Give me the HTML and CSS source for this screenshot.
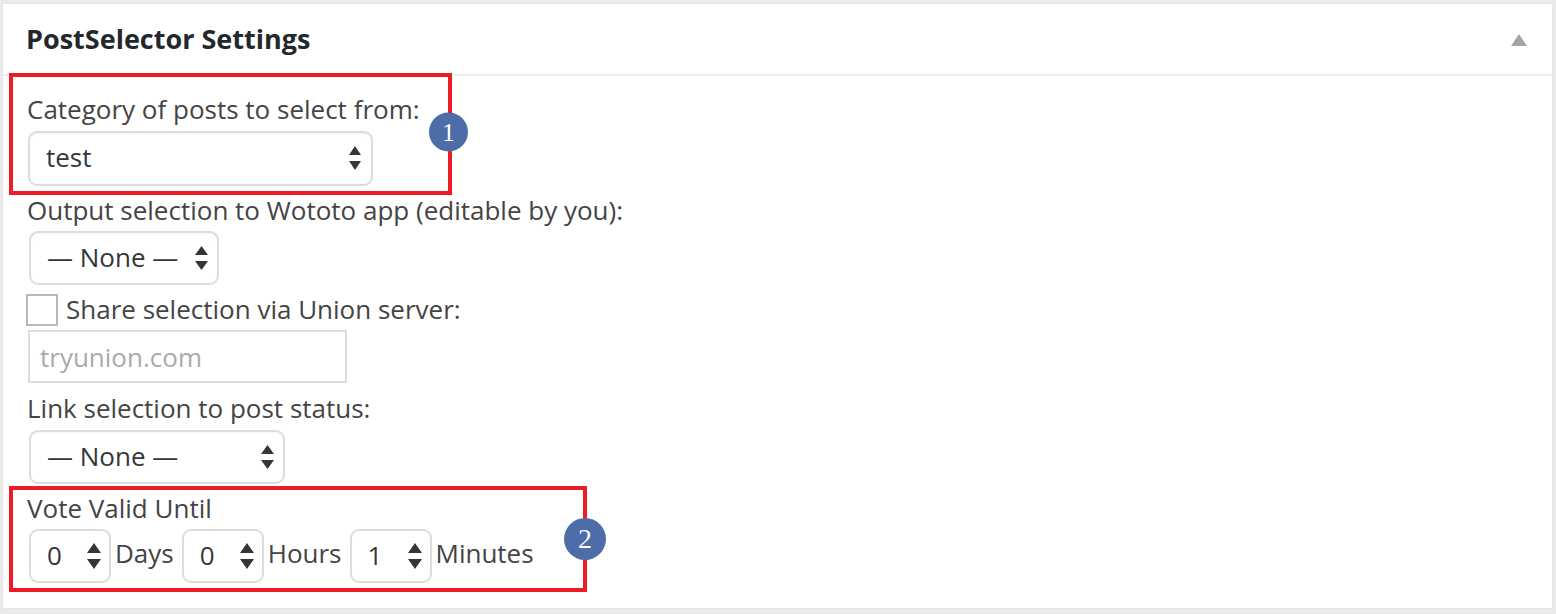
FILE: index.html
```html
<!DOCTYPE html>
<html>
<head>
<meta charset="utf-8">
<link rel="stylesheet" href="styles.css">
</head>
<body>
<div class="panel">
  <div class="panel-head">
    <h2 class="title">PostSelector Settings</h2>
    <svg class="toggle" width="16" height="12" viewBox="0 0 16 12"><polygon points="8,0 16,12 0,12" fill="#a0a5aa"/></svg>
  </div>
  <div class="panel-body">
    <div class="group group-1">
      <div class="label">Category of posts to select from:</div>
      <div class="select sel-1"><span>test</span>
        <svg class="arrows" width="12" height="25" viewBox="0 0 12 25"><polygon points="6,0 12,9 0,9" fill="#32373c"/><polygon points="0,15 12,15 6,24" fill="#32373c"/></svg>
      </div>
      <span class="badge badge-1">1</span>
    </div>
    <div class="label">Output selection to Wototo app (editable by you):</div>
    <div class="select sel-2"><span>— None —</span>
      <svg class="arrows" width="13" height="25" viewBox="0 0 13 25"><polygon points="6.5,0 13,9 0,9" fill="#32373c"/><polygon points="0,15 13,15 6.5,24" fill="#32373c"/></svg>
    </div>
    <div class="check-row">
      <span class="checkbox"></span>
      <span class="label-inline">Share selection via Union server:</span>
    </div>
    <div class="text-input">tryunion.com</div>
    <div class="label label-3">Link selection to post status:</div>
    <div class="select sel-3"><span>— None —</span>
      <svg class="arrows" width="13" height="25" viewBox="0 0 13 25"><polygon points="6.5,0 13,9 0,9" fill="#32373c"/><polygon points="0,15 13,15 6.5,24" fill="#32373c"/></svg>
    </div>
    <div class="group group-2">
      <div class="label">Vote Valid Until</div>
      <div class="time-row">
        <div class="number"><span>0</span>
          <svg class="arrows" width="14" height="27" viewBox="0 0 14 27"><polygon points="7,0 14,10 0,10" fill="#32373c"/><polygon points="0,16 14,16 7,26" fill="#32373c"/></svg>
        </div>
        <span class="unit">Days</span>
        <div class="number"><span>0</span>
          <svg class="arrows" width="14" height="27" viewBox="0 0 14 27"><polygon points="7,0 14,10 0,10" fill="#32373c"/><polygon points="0,16 14,16 7,26" fill="#32373c"/></svg>
        </div>
        <span class="unit">Hours</span>
        <div class="number"><span>1</span>
          <svg class="arrows" width="14" height="27" viewBox="0 0 14 27"><polygon points="7,0 14,10 0,10" fill="#32373c"/><polygon points="0,16 14,16 7,26" fill="#32373c"/></svg>
        </div>
        <span class="unit">Minutes</span>
      </div>
      <span class="badge badge-2">2</span>
    </div>
  </div>
</div>
</body>
</html>
```

FILE: styles.css
```css
html, body {
  margin: 0;
  padding: 0;
}
body {
  background: #ebebeb;
  font-family: "Open Sans", "Liberation Sans", sans-serif;
  color: #444;
  font-size: 26px;
  line-height: 30px;
  width: 1556px;
  height: 614px;
  overflow: hidden;
}
.panel {
  margin: 3px 3px 0 2px;
  height: 606px;
  box-sizing: border-box;
  background: #fff;
  border: 1px solid #e5e5e5;
}
.panel-head {
  height: 70px;
  border-bottom: 2px solid #eeeeee;
  display: flex;
  align-items: center;
  justify-content: space-between;
  padding: 0 25px 0 23px;
}
.title {
  margin: 0;
  font-size: 27px;
  line-height: 30px;
  font-weight: 700;
  color: #23282d;
}
.toggle {
  display: block;
  margin-top: 2px;
}
.panel-body {
  padding: 0 0 16px 24px;
}
.group {
  position: relative;
  z-index: 1;
  box-sizing: border-box;
  border: 4px solid #ed1c24;
  margin-left: -18px;
  padding: 0 0 5px 14px;
}
.group-1 {
  width: 443px;
  margin-top: -3px;
  padding-top: 17px;
}
.group-2 {
  width: 578px;
  margin-top: 2px;
  padding-top: 3px;
}
.label {
  height: 30px;
  white-space: nowrap;
}
.select {
  box-sizing: border-box;
  display: flex;
  align-items: center;
  justify-content: space-between;
  border: 2px solid #dddddd;
  border-radius: 9px;
  background: #fff;
  box-shadow: inset 0 1px 2px rgba(0, 0, 0, 0.05);
  color: #32373c;
  padding: 0 9px 0 16px;
  margin-left: 1px;
}
.select span {
  margin-top: -3px;
}
.sel-1 {
  margin-top: 7px;
  width: 345px;
  height: 55px;
  padding-right: 10px;
}
.sel-2 {
  margin-top: 6px;
  width: 190px;
  height: 54px;
  margin-left: 2px;
}
.sel-3 {
  margin-top: 7px;
  width: 256px;
  height: 54px;
  margin-left: 2px;
}
.arrows {
  display: block;
  flex: none;
}
.check-row {
  margin-top: 9px;
  display: flex;
  align-items: center;
  height: 32px;
}
.checkbox {
  box-sizing: border-box;
  width: 32px;
  height: 32px;
  border: 2px solid #b4b9be;
  background: #fff;
  margin-left: -1px;
  margin-right: 8px;
  flex: none;
}
.label-inline {
  margin-top: -2px;
}
.text-input {
  box-sizing: border-box;
  margin-top: 4px;
  margin-left: 1px;
  width: 319px;
  height: 53px;
  border: 2px solid #dddddd;
  color: #aaaaaa;
  padding: 10px 0 0 10px;
}
.label-3 {
  margin-top: 10px;
}
.time-row {
  margin-top: 6px;
  display: flex;
  align-items: center;
}
.number {
  box-sizing: border-box;
  display: flex;
  align-items: center;
  justify-content: space-between;
  width: 82px;
  height: 54px;
  border: 2px solid #dddddd;
  border-radius: 9px;
  padding: 0 8px 0 16px;
  color: #32373c;
  margin-left: 2px;
}
.number span {
  margin-top: -2px;
}
.unit {
  margin: 0 6px 6px 4px;
  color: #444;
}
.badge {
  position: absolute;
  top: 50%;
  display: flex;
  align-items: center;
  justify-content: center;
  border-radius: 50%;
  background: #4d6da8;
  color: #fff;
  font-family: "Liberation Serif", "DejaVu Serif", serif;
}
.badge-1 {
  width: 39px;
  height: 39px;
  right: -20px;
  transform: translateY(-50%);
  margin-top: -2px;
  font-size: 25px;
}
.badge-2 {
  width: 42px;
  height: 42px;
  right: -23px;
  transform: translateY(-50%);
  font-size: 28px;
}
```
